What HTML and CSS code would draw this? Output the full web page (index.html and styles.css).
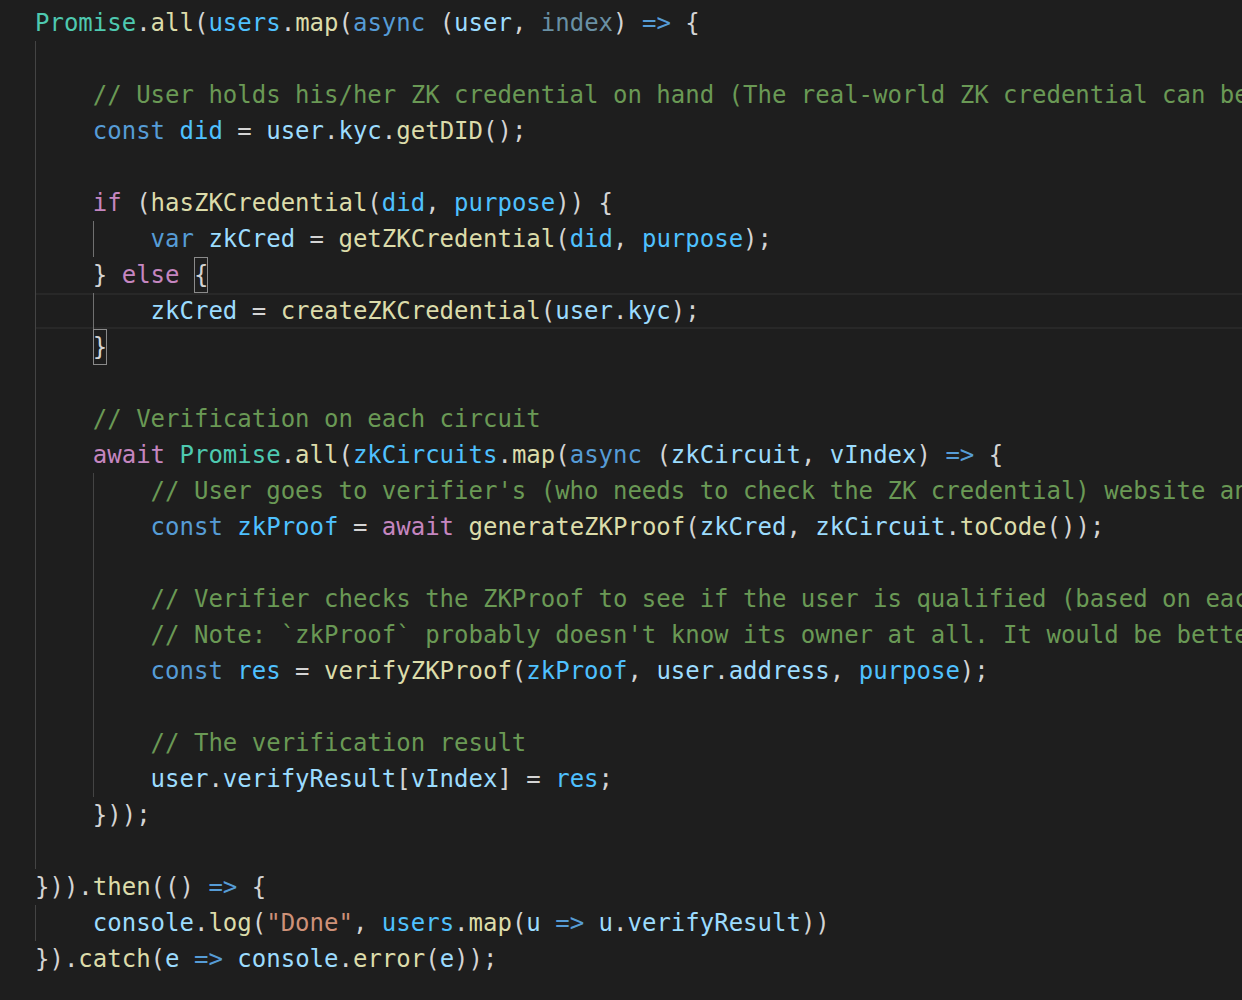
FILE: index.html
```html
<!DOCTYPE html>
<html>
<head>
<meta charset="utf-8">
<link rel="stylesheet" href="styles.css">
</head>
<body>
<div class="editor">
<div class="ln"><span class="t">Promise</span>.<span class="f">all</span>(<span class="n">users</span>.<span class="f">map</span>(<span class="k">async</span> (<span class="v">user</span>, <span class="d">index</span>) <span class="k">=&gt;</span> {</div>
<div class="ln"><span class="g">    </span></div>
<div class="ln"><span class="g">    </span><span class="m">// User holds his/her ZK credential on hand (The real-world ZK credential can be</span></div>
<div class="ln"><span class="g">    </span><span class="k">const</span> <span class="n">did</span> = <span class="v">user</span>.<span class="v">kyc</span>.<span class="f">getDID</span>();</div>
<div class="ln"><span class="g">    </span></div>
<div class="ln"><span class="g">    </span><span class="c">if</span> (<span class="f">hasZKCredential</span>(<span class="n">did</span>, <span class="n">purpose</span>)) {</div>
<div class="ln"><span class="g">    </span><span class="ga">    </span><span class="k">var</span> <span class="v">zkCred</span> = <span class="f">getZKCredential</span>(<span class="n">did</span>, <span class="n">purpose</span>);</div>
<div class="ln"><span class="g">    </span>} <span class="c">else</span> <span class="bm">{</span></div>
<div class="ln cur"><span class="g">    </span><span class="ga">    </span><span class="v">zkCred</span> = <span class="f">createZKCredential</span>(<span class="v">user</span>.<span class="v">kyc</span>);</div>
<div class="ln"><span class="g">    </span><span class="bm">}</span></div>
<div class="ln"><span class="g">    </span></div>
<div class="ln"><span class="g">    </span><span class="m">// Verification on each circuit</span></div>
<div class="ln"><span class="g">    </span><span class="c">await</span> <span class="t">Promise</span>.<span class="f">all</span>(<span class="n">zkCircuits</span>.<span class="f">map</span>(<span class="k">async</span> (<span class="v">zkCircuit</span>, <span class="v">vIndex</span>) <span class="k">=&gt;</span> {</div>
<div class="ln"><span class="g">    </span><span class="g">    </span><span class="m">// User goes to verifier's (who needs to check the ZK credential) website an</span></div>
<div class="ln"><span class="g">    </span><span class="g">    </span><span class="k">const</span> <span class="n">zkProof</span> = <span class="c">await</span> <span class="f">generateZKProof</span>(<span class="v">zkCred</span>, <span class="v">zkCircuit</span>.<span class="f">toCode</span>());</div>
<div class="ln"><span class="g">    </span><span class="g">    </span></div>
<div class="ln"><span class="g">    </span><span class="g">    </span><span class="m">// Verifier checks the ZKProof to see if the user is qualified (based on eac</span></div>
<div class="ln"><span class="g">    </span><span class="g">    </span><span class="m">// Note: `zkProof` probably doesn't know its owner at all. It would be bette</span></div>
<div class="ln"><span class="g">    </span><span class="g">    </span><span class="k">const</span> <span class="n">res</span> = <span class="f">verifyZKProof</span>(<span class="n">zkProof</span>, <span class="v">user</span>.<span class="v">address</span>, <span class="n">purpose</span>);</div>
<div class="ln"><span class="g">    </span><span class="g">    </span></div>
<div class="ln"><span class="g">    </span><span class="g">    </span><span class="m">// The verification result</span></div>
<div class="ln"><span class="g">    </span><span class="g">    </span><span class="v">user</span>.<span class="v">verifyResult</span>[<span class="v">vIndex</span>] = <span class="n">res</span>;</div>
<div class="ln"><span class="g">    </span>}));</div>
<div class="ln"><span class="g">    </span></div>
<div class="ln">})).<span class="f">then</span>(() <span class="k">=&gt;</span> {</div>
<div class="ln"><span class="g">    </span><span class="v">console</span>.<span class="f">log</span>(<span class="s">"Done"</span>, <span class="n">users</span>.<span class="f">map</span>(<span class="v">u</span> <span class="k">=&gt;</span> <span class="v">u</span>.<span class="v">verifyResult</span>))</div>
<div class="ln">}).<span class="f">catch</span>(<span class="v">e</span> <span class="k">=&gt;</span> <span class="v">console</span>.<span class="f">error</span>(<span class="v">e</span>));</div>
</div>
</body>
</html>
```
FILE: styles.css
```css
html, body {
  margin: 0;
  padding: 0;
  background: #1e1e1e;
  overflow: hidden;
  width: 1242px;
  height: 1000px;
}

.editor {
  padding-top: 5px;
  font-family: "DejaVu Sans Mono", "Liberation Mono", monospace;
  font-size: 24px;
  color: #d4d4d4;
}

.ln {
  margin-left: 35px;
  height: 36px;
  line-height: 37px;
  white-space: pre;
  overflow: hidden;
}

.cur {
  box-shadow: inset 0 2px 0 #282828, inset 0 -2px 0 #282828;
}

.g,
.ga {
  display: inline-block;
  height: 36px;
  vertical-align: top;
  background-repeat: no-repeat;
}

.g {
  background-image: linear-gradient(to right, #444444 1px, transparent 1px);
}

.ga {
  background-image: linear-gradient(to right, #707070 1px, transparent 1px);
}

.bm {
  display: inline-block;
  height: 36px;
  vertical-align: top;
  outline: 1px solid #8a8a8a;
  outline-offset: -1px;
}

.k { color: #569cd6; }
.c { color: #c586c0; }
.t { color: #4ec9b0; }
.f { color: #dcdcaa; }
.v { color: #9cdcfe; }
.n { color: #4fc1ff; }
.m { color: #6a9955; }
.s { color: #ce9178; }
.d { color: #6990a4; }
```
